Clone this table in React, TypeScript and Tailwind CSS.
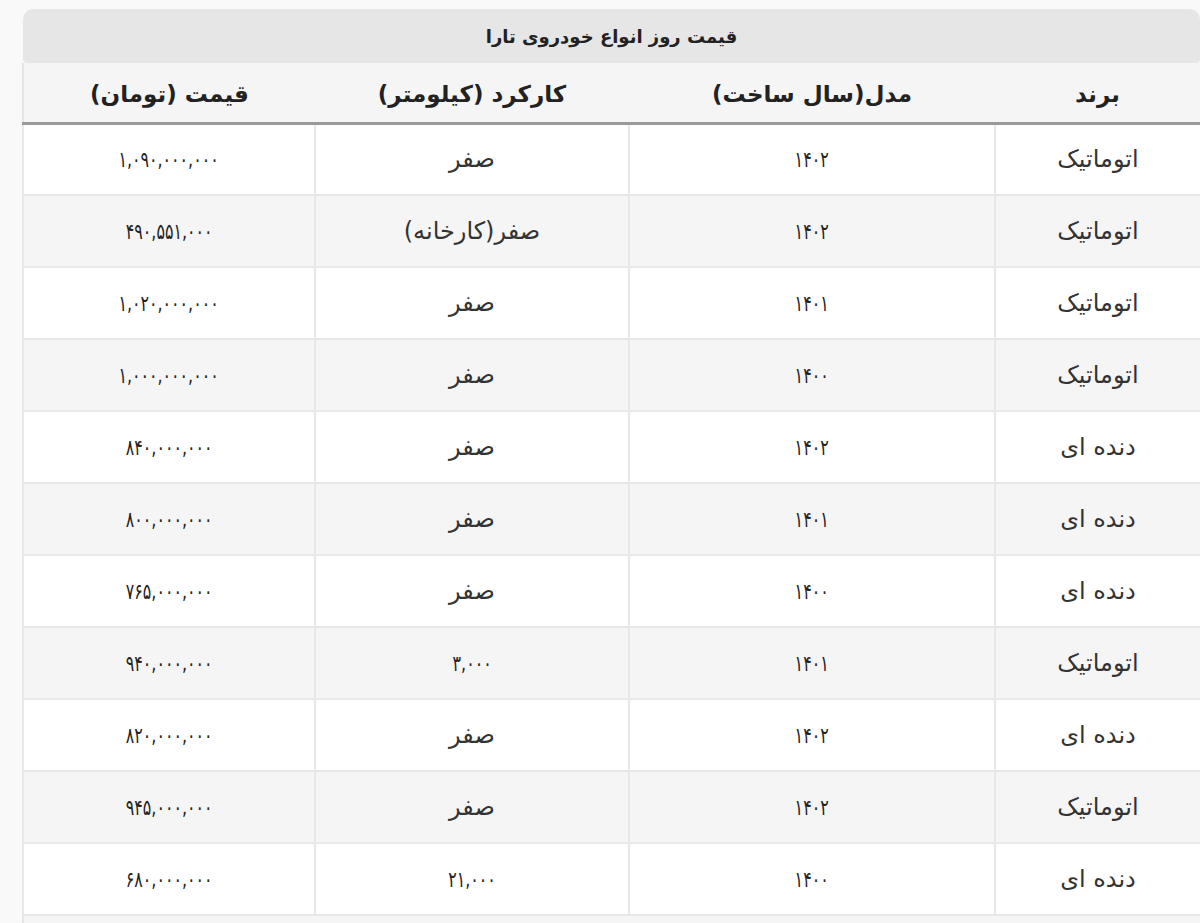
const rows: [string, string, string, string][] = [
  ["اتوماتیک", "۱۴۰۲", "صفر", "۱,۰۹۰,۰۰۰,۰۰۰"],
  ["اتوماتیک", "۱۴۰۲", "صفر(کارخانه)", "۴۹۰,۵۵۱,۰۰۰"],
  ["اتوماتیک", "۱۴۰۱", "صفر", "۱,۰۲۰,۰۰۰,۰۰۰"],
  ["اتوماتیک", "۱۴۰۰", "صفر", "۱,۰۰۰,۰۰۰,۰۰۰"],
  ["دنده ای", "۱۴۰۲", "صفر", "۸۴۰,۰۰۰,۰۰۰"],
  ["دنده ای", "۱۴۰۱", "صفر", "۸۰۰,۰۰۰,۰۰۰"],
  ["دنده ای", "۱۴۰۰", "صفر", "۷۶۵,۰۰۰,۰۰۰"],
  ["اتوماتیک", "۱۴۰۱", "۳,۰۰۰", "۹۴۰,۰۰۰,۰۰۰"],
  ["دنده ای", "۱۴۰۲", "صفر", "۸۲۰,۰۰۰,۰۰۰"],
  ["اتوماتیک", "۱۴۰۲", "صفر", "۹۴۵,۰۰۰,۰۰۰"],
  ["دنده ای", "۱۴۰۰", "۲۱,۰۰۰", "۶۸۰,۰۰۰,۰۰۰"],
];

const headers = ["برند", "مدل(سال ساخت)", "کارکرد (کیلومتر)", "قیمت (تومان)"];
const widths = ["w-[205px]", "w-[366px]", "w-[314px]", "w-[292px]"];

// persian digits render wide in DejaVu, squeeze them (letter-spacing is ignored for arabic script)
const isNumber = (s: string) => /^[۰-۹,]+$/.test(s);

export default function App() {
  return (
    <div
      className="min-h-[923px] bg-[#f9f9f9] pt-[9px] pl-[23px] overflow-hidden"
      style={{ fontFamily: '"DejaVu Sans", "Noto Sans Arabic", sans-serif' }}
    >
      <div dir="rtl" className="w-[1177px]">
        {/* Caption */}
        <div className="h-[54px] rounded-t-[10px] rounded-b-[4px] bg-[#e6e6e6] flex items-center justify-center text-[18px] font-bold text-[#222]">
          قیمت روز انواع خودروی تارا
        </div>

        <table className="w-full border-collapse table-fixed bg-white border-l-2 border-[#e6e6e6]">
          <colgroup>
            {widths.map((w) => (
              <col key={w} className={w} />
            ))}
          </colgroup>
          <thead>
            <tr className="h-[60px] bg-[#f5f5f5] border-b-[3px] border-[#9a9a9a]">
              {headers.map((h) => (
                <th key={h} className="text-center font-bold text-[23px] text-[#222] px-2 pt-1">
                  {h}
                </th>
              ))}
            </tr>
          </thead>
          <tbody>
            {rows.map((r, i) => (
              <tr key={i} className={`h-[72px] ${i % 2 === 1 ? "bg-[#f5f5f5]" : "bg-white"}`}>
                {r.map((c, j) => (
                  <td
                    key={j}
                    className="text-center text-[#333] border-2 border-[#e8e8e8] border-r-0 px-2 text-[24px]"
                  >
                    {isNumber(c) ? (
                      <span className="inline-block text-[22px] text-[#222] scale-x-[0.72]">{c}</span>
                    ) : (
                      c
                    )}
                  </td>
                ))}
              </tr>
            ))}
            <tr className="h-[20px] bg-[#f5f5f5]">
              <td className="border-t-2 border-[#e8e8e8]" colSpan={4}></td>
            </tr>
          </tbody>
        </table>
      </div>
    </div>
  );
}
